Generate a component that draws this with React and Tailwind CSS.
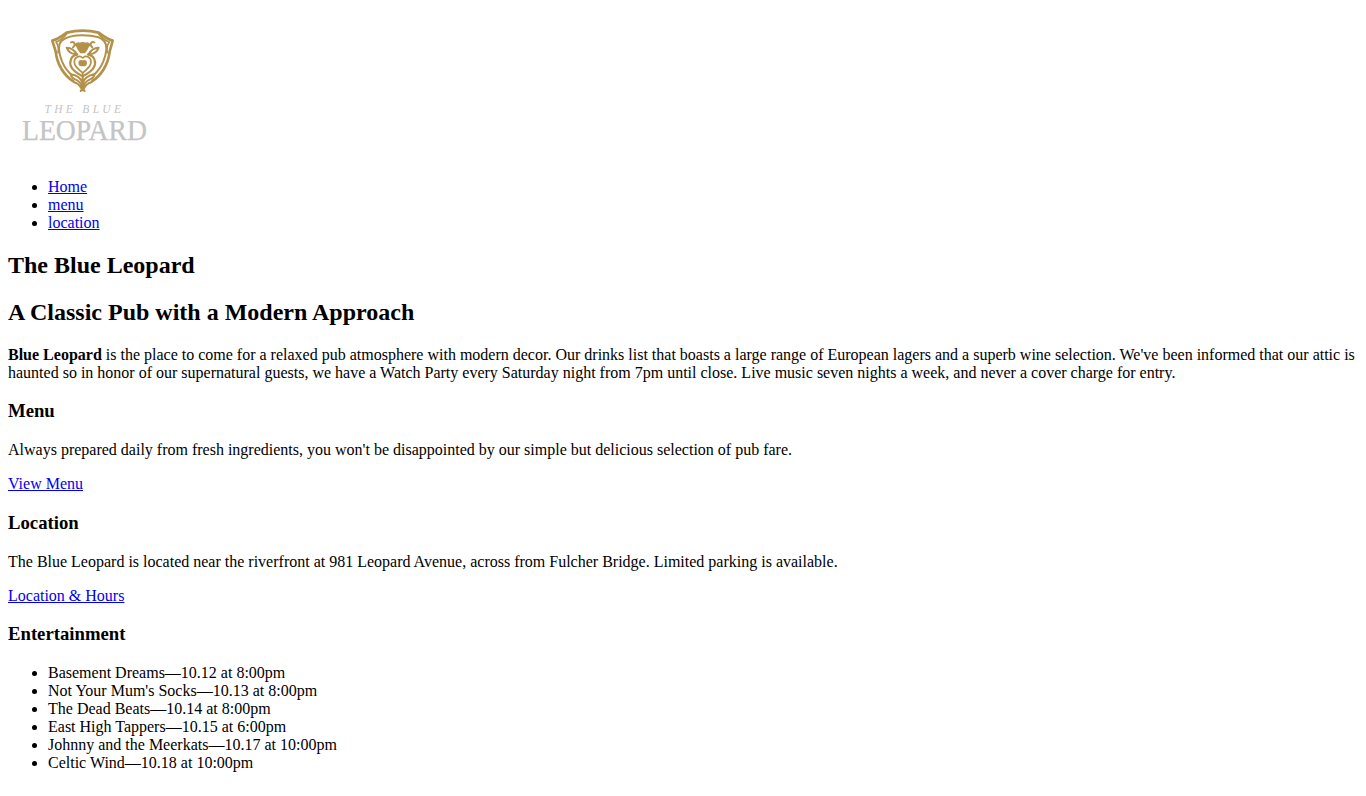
function Logo() {
  return (
    <svg className="block h-[150px] w-[150px]" viewBox="8 8 150 150" role="img" aria-label="The Blue Leopard">
      <g transform="translate(40 20) scale(.3333)" fill="none" stroke="#b3914a" strokeWidth="8" strokeLinecap="round" strokeLinejoin="round">
        <path d="M37 62C54 58 67 48 80 38Q128 26 176 38C189 48 202 58 218 62Q214 78 209 94C205 133 184 166 156 184M37 62Q42 78 47 94C51 133 72 166 100 184" />
        <path d="M64 63C80 50 104 46 128 46Q154 46 176 52Q186 56 192 63C202 74 200 98 190 124Q180 148 162 164M64 63C54 74 56 98 66 124Q76 148 94 164" strokeWidth="6" />
        <path d="M80 42Q66 60 48 66Q58 80 54 98M176 42Q190 60 208 66Q198 80 202 98" strokeWidth="5" />
        <path d="M93 67Q101 64 104 71Q105 78 99 82M163 67Q155 64 152 71Q151 78 157 82" strokeWidth="6" />
        <path d="M106 74Q112 67 119 70Q128 66 137 70Q144 67 150 74Q143 80 141 88L134 98H122L115 88Q113 80 106 74Z" fill="#b3914a" strokeWidth="4" />
        <path d="M80 83Q100 84 110 102Q88 104 80 83ZM176 83Q156 84 146 102Q168 104 176 83Z" strokeWidth="6" />
        <path d="M112 104C92 106 86 128 95 143Q101 154 128 169Q155 154 161 143C170 128 164 106 144 104" strokeWidth="6.5" />
        <path d="M128 114C118 103 102 112 103 127C104 142 119 149 128 159C137 149 152 142 153 127C154 112 138 103 128 114Z" strokeWidth="5" />
        <path d="M118 124Q123 120 128 124Q133 120 138 124Q141 135 133 137H123Q115 135 118 124Z" fill="#b3914a" strokeWidth="4" />
        <path d="M128 160V211M93 163Q121 168 127 188M163 163Q135 168 129 188M93 167Q97 176 107 179Q121 184 127 201M163 167Q159 176 149 179Q135 184 129 201M102 187Q116 190 124 205M154 187Q140 190 132 205M122 213L128 206L134 213" strokeWidth="6" />
      </g>
      <g fill="#c4c4c4" className="font-['Liberation_Serif',serif]">
        <text x="44.5" y="113" fontSize="11.5" fontStyle="italic" textLength="76.5" lengthAdjust="spacing">THE BLUE</text>
        <text x="22" y="140" fontSize="29" textLength="125" lengthAdjust="spacingAndGlyphs" stroke="#c4c4c4" strokeWidth=".25">LEOPARD</text>
      </g>
    </svg>
  );
}

function Link({ children }) {
  return <a href="#" className="text-[#0000ee] underline">{children}</a>;
}

function SectionTitle({ children }) {
  return <h3 className="my-[18.72px] text-[18.72px] leading-[22px] font-bold">{children}</h3>;
}

const events = [
  "Basement Dreams—10.12 at 8:00pm",
  "Not Your Mum's Socks—10.13 at 8:00pm",
  "The Dead Beats—10.14 at 8:00pm",
  "East High Tappers—10.15 at 6:00pm",
  "Johnny and the Meerkats—10.17 at 10:00pm",
  "Celtic Wind—10.18 at 10:00pm",
];

export default function App() {
  return (
    <div className="bg-white p-2 font-['Liberation_Serif',serif] text-base leading-[18px] text-black">
      <header>
        <Logo />
        <ul className="mt-5 list-disc pl-10">
          <li><Link>Home</Link></li>
          <li><Link>menu</Link></li>
          <li><Link>location</Link></li>
        </ul>
      </header>
      <main>
        <h1 className="my-[19.92px] text-2xl leading-[27px] font-bold">The Blue Leopard</h1>
        <h2 className="my-[19.92px] text-2xl leading-[27px] font-bold">A Classic Pub with a Modern Approach</h2>
        <p className="my-4">
          <strong>Blue Leopard</strong> is the place to come for a relaxed pub atmosphere with modern decor. Our drinks list that boasts a large range of European lagers and a superb wine selection. We've been informed that our attic is haunted so in honor of our supernatural guests, we have a Watch Party every Saturday night from 7pm until close. Live music seven nights a week, and never a cover charge for entry.
        </p>
        <SectionTitle>Menu</SectionTitle>
        <p className="my-4">Always prepared daily from fresh ingredients, you won't be disappointed by our simple but delicious selection of pub fare.</p>
        <p className="my-4"><Link>View Menu</Link></p>
        <SectionTitle>Location</SectionTitle>
        <p className="my-4">The Blue Leopard is located near the riverfront at 981 Leopard Avenue, across from Fulcher Bridge. Limited parking is available.</p>
        <p className="my-4"><Link>Location &amp; Hours</Link></p>
        <SectionTitle>Entertainment</SectionTitle>
        <ul className="list-disc pl-10">
          {events.map((event) => <li key={event}>{event}</li>)}
        </ul>
      </main>
    </div>
  );
}
